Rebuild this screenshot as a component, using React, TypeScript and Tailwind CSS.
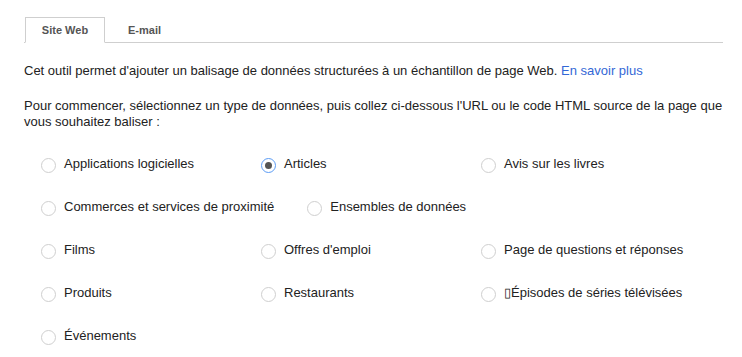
import { useState } from "react";

const types = [
  "Applications logicielles",
  "Articles",
  "Avis sur les livres",
  "Commerces et services de proximité",
  "Ensembles de données",
  "Films",
  "Offres d'emploi",
  "Page de questions et réponses",
  "Produits",
  "Restaurants",
  "\u25AFÉpisodes de séries télévisées",
  "Événements",
];

function Radio({ checked }: { checked: boolean }) {
  return (
    <span
      className={
        checked
          ? "mt-[2px] flex h-[15px] w-[15px] shrink-0 items-center justify-center rounded-full border border-[#5b9cf5] bg-white"
          : "mt-[2px] flex h-[15px] w-[15px] shrink-0 items-center justify-center rounded-full border border-[#cfcfcf] bg-white"
      }
    >
      {checked && <span className="h-[7px] w-[7px] rounded-full bg-[#555]" />}
    </span>
  );
}

export default function App() {
  const [selected, setSelected] = useState("Articles");

  return (
    <div className="min-h-screen bg-white pl-6 pr-[19px] pt-[17px] font-['Liberation_Sans',Arial,sans-serif] text-[13px] leading-[16px] text-[#222]">
      {/* onglets */}
      <div className="flex border-b border-[#cfcfcf]">
        <div className="-mb-px ml-px flex h-[26px] w-[80px] items-center justify-center border border-b-white border-[#cfcfcf] bg-white text-[11px] font-bold text-[#555]">
          Site Web
        </div>
        <div className="flex h-[25px] items-center pl-[23px] text-[11px] font-bold text-[#555]">
          E-mail
        </div>
      </div>

      <p className="mt-[20px]">
        Cet outil permet d'ajouter un balisage de données structurées à un échantillon de page Web.{" "}
        <a className="text-[#3367d6]" href="#">
          En savoir plus
        </a>
      </p>

      <p className="mt-[19px]">
        Pour commencer, sélectionnez un type de données, puis collez ci-dessous l'URL ou le code HTML source de la page que
        vous souhaitez baliser :
      </p>

      <div className="ml-[17px] mt-[26px] flex flex-wrap">
        {types.map((t) => (
          <label
            key={t}
            onClick={() => setSelected(t)}
            className="flex h-[43px] min-w-[220px] cursor-pointer items-start gap-2 pr-[33px]"
          >
            <Radio checked={selected === t} />
            <span className="whitespace-nowrap">{t}</span>
          </label>
        ))}
      </div>
    </div>
  );
}
